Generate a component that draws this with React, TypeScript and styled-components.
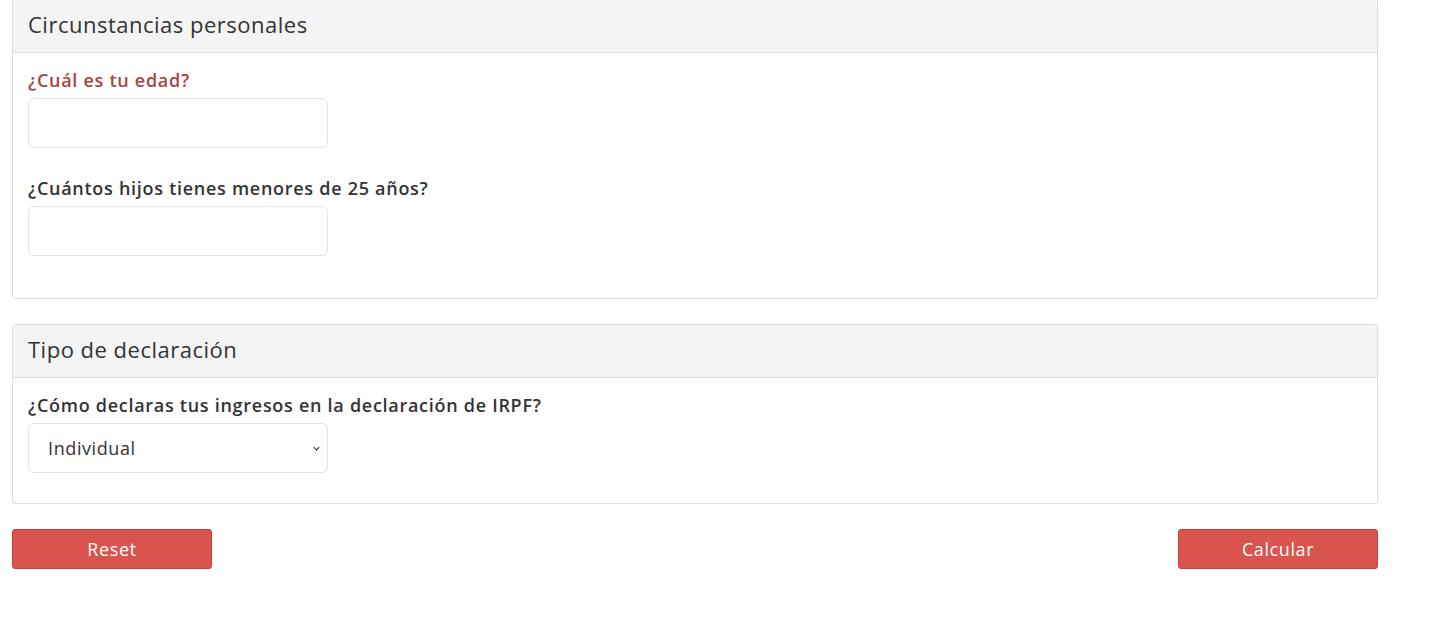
import React from 'react';
import styled, { createGlobalStyle } from 'styled-components';

const GlobalStyle = createGlobalStyle`
  html, body {
    margin: 0;
    padding: 0;
    background: #fff;
  }

  body {
    font-family: 'Open Sans', 'Liberation Sans', sans-serif;
    color: #333;
  }
`;

function App() {
  return (
    <>
      <GlobalStyle />
      <Page>
        <Panel>
          <PanelHeading>Circunstancias personales</PanelHeading>
          <PanelBody $bottom={42}>
            <FormGroup>
              <Label $error>¿Cuál es tu edad?</Label>
              <Input type="text" />
            </FormGroup>
            <FormGroup>
              <Label>¿Cuántos hijos tienes menores de 25 años?</Label>
              <Input type="text" />
            </FormGroup>
          </PanelBody>
        </Panel>

        <Panel>
          <PanelHeading>Tipo de declaración</PanelHeading>
          <PanelBody $bottom={30}>
            <FormGroup>
              <Label>¿Cómo declaras tus ingresos en la declaración de IRPF?</Label>
              <SelectWrapper>
                <Select defaultValue="individual">
                  <option value="individual">Individual</option>
                  <option value="conjunta">Conjunta</option>
                </Select>
                <Chevron viewBox="0 0 10 6">
                  <path d="M1 1l4 4 4-4" />
                </Chevron>
              </SelectWrapper>
            </FormGroup>
          </PanelBody>
        </Panel>

        <Actions>
          <Button>Reset</Button>
          <Button>Calcular</Button>
        </Actions>
      </Page>
    </>
  );
}

export default App;

const Page = styled.div`
  width: 1366px;
  margin: -1px 0 0 12px;
  display: flex;
  flex-direction: column;
  gap: 25px;
`;

const Panel = styled.section`
  border: 1px solid #ddd;
  border-radius: 3px;
  background: #fff;
  overflow: hidden;
`;

const PanelHeading = styled.h3`
  margin: 0;
  height: 53px;
  box-sizing: border-box;
  display: flex;
  align-items: center;
  padding: 0 15px 4px;
  background: #f4f4f4;
  border-bottom: 1px solid #ddd;
  font-size: 22px;
  letter-spacing: 0.5px;
  font-weight: 400;
  color: #333;
`;

const PanelBody = styled.div<{ $bottom: number }>`
  padding: 17px 15px ${(p) => p.$bottom}px;
  display: flex;
  flex-direction: column;
  gap: 30px;
`;

const FormGroup = styled.div`
  display: flex;
  flex-direction: column;
  gap: 8px;
`;

const Label = styled.label<{ $error?: boolean }>`
  font-size: 18px;
  line-height: 20px;
  letter-spacing: 0.72px;
  font-weight: 600;
  color: ${(p) => (p.$error ? '#a94442' : '#333')};
`;

const Input = styled.input`
  width: 300px;
  height: 50px;
  box-sizing: border-box;
  border: 1px solid #e3e3e3;
  border-radius: 6px;
  padding: 0 19px;
  font: inherit;
  font-size: 18px;
  outline: none;
`;

const SelectWrapper = styled.div`
  position: relative;
  width: 300px;
`;

const Select = styled.select`
  appearance: none;
  width: 300px;
  height: 50px;
  box-sizing: border-box;
  border: 1px solid #e3e3e3;
  border-radius: 6px;
  background: #fff;
  padding: 0 19px;
  font: inherit;
  font-size: 18px;
  letter-spacing: 0.6px;
  color: #333;
  outline: none;
`;

const Chevron = styled.svg`
  position: absolute;
  right: 8px;
  top: 23px;
  width: 7px;
  height: 5px;
  fill: none;
  stroke: #333;
  stroke-width: 1.5;
  pointer-events: none;
`;

const Actions = styled.div`
  display: flex;
  justify-content: space-between;
`;

const Button = styled.button`
  width: 200px;
  height: 40px;
  border: 1px solid #d43f3a;
  border-radius: 3px;
  background: #d9534f;
  color: #fff;
  font: inherit;
  font-size: 18px;
  letter-spacing: 0.6px;
  cursor: pointer;
`;
